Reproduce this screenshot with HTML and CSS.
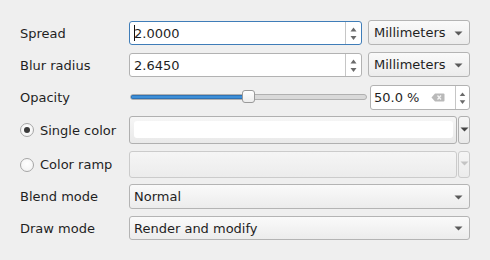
FILE: index.html
```html
<!DOCTYPE html>
<html>
<head>
<meta charset="utf-8">
<link rel="stylesheet" href="styles.css">
</head>
<body>
<div class="form">
  <div class="row">
    <div class="label">Spread</div>
    <div class="controls">
      <div class="spin spin-main focus">
        <span class="value"><i class="caret"></i>2.0000</span>
        <span class="arrows"><svg width="15" height="22" viewBox="0 0 15 22"><path d="M4.5 9.5 L7.5 5.5 L10.5 9.5 Z" fill="#6a6a6a"/><path d="M4.5 14 L7.5 18 L10.5 14 Z" fill="#6a6a6a"/></svg></span>
      </div>
      <div class="combo unit"><span>Millimeters</span><svg class="drop" width="9" height="5" viewBox="0 0 9 5"><path d="M0.5 0.5 H8.5 L4.5 4.5 Z" fill="#5a5a5a"/></svg></div>
    </div>
  </div>
  <div class="row">
    <div class="label">Blur radius</div>
    <div class="controls">
      <div class="spin spin-main">
        <span class="value">2.6450</span>
        <span class="arrows"><svg width="15" height="22" viewBox="0 0 15 22"><path d="M4.5 9.5 L7.5 5.5 L10.5 9.5 Z" fill="#6a6a6a"/><path d="M4.5 14 L7.5 18 L10.5 14 Z" fill="#6a6a6a"/></svg></span>
      </div>
      <div class="combo unit"><span>Millimeters</span><svg class="drop" width="9" height="5" viewBox="0 0 9 5"><path d="M0.5 0.5 H8.5 L4.5 4.5 Z" fill="#5a5a5a"/></svg></div>
    </div>
  </div>
  <div class="row">
    <div class="label">Opacity</div>
    <div class="controls opacity">
      <div class="slider">
        <div class="groove"><div class="fill" style="width:50%"></div></div>
        <div class="handle" style="left:113px"></div>
      </div>
      <div class="spin spin-pct">
        <span class="value">50.0 %</span>
        <svg class="clear" width="14" height="9" viewBox="0 0 14 9"><path d="M4 0.5 H12.5 Q13.5 0.5 13.5 1.5 V7.5 Q13.5 8.5 12.5 8.5 H4 L0.5 4.5 Z" fill="#b9b9b9"/><path d="M6.5 2.5 L10 6.5 M10 2.5 L6.5 6.5" stroke="#f4f4f4" stroke-width="1.3"/></svg>
        <span class="arrows"><svg width="14" height="23" viewBox="0 0 14 23"><path d="M4 10 L7 6 L10 10 Z" fill="#6a6a6a"/><path d="M4 14.5 L7 18.5 L10 14.5 Z" fill="#6a6a6a"/></svg></span>
      </div>
    </div>
  </div>
  <div class="row">
    <div class="label radio-label"><span class="radio checked"></span>Single color</div>
    <div class="controls colorrow">
      <div class="colorbtn"><div class="swatch"></div></div>
      <div class="menubtn"><svg width="9" height="5" viewBox="0 0 9 5"><path d="M0.5 0.5 H8.5 L4.5 4.5 Z" fill="#444"/></svg></div>
    </div>
  </div>
  <div class="row">
    <div class="label radio-label"><span class="radio"></span>Color ramp</div>
    <div class="controls colorrow ramp">
      <div class="colorbtn disabled"></div>
      <div class="menubtn disabled"><svg width="9" height="5" viewBox="0 0 9 5"><path d="M0.5 0.5 H8.5 L4.5 4.5 Z" fill="#c4c4c4"/></svg></div>
    </div>
  </div>
  <div class="row">
    <div class="label">Blend mode</div>
    <div class="controls">
      <div class="combo wide blend"><span>Normal</span><svg class="drop" width="9" height="5" viewBox="0 0 9 5"><path d="M0.5 0.5 H8.5 L4.5 4.5 Z" fill="#5a5a5a"/></svg></div>
    </div>
  </div>
  <div class="row">
    <div class="label">Draw mode</div>
    <div class="controls">
      <div class="combo wide draw"><span>Render and modify</span><svg class="drop" width="9" height="5" viewBox="0 0 9 5"><path d="M0.5 0.5 H8.5 L4.5 4.5 Z" fill="#5a5a5a"/></svg></div>
    </div>
  </div>
</div>
</body>
</html>
```

FILE: styles.css
```css
html, body {
  margin: 0;
  padding: 0;
  background: #efefef;
}
body {
  width: 490px;
  height: 260px;
  overflow: hidden;
  font-family: "DejaVu Sans", sans-serif;
  font-size: 13px;
  color: #1f1f1f;
}
.form {
  padding: 21px 20px 0 20px;
  display: grid;
  grid-template-rows: 25px 25px 24px 28px 26px 25px 24px;
  row-gap: 7px;
  align-items: start;
}
.row {
  display: grid;
  grid-template-columns: 109px 341px;
  align-items: center;
}
.label {
  white-space: nowrap;
}
.controls {
  display: flex;
  align-items: center;
  gap: 6px;
}
.spin {
  box-sizing: border-box;
  height: 24px;
  display: flex;
  align-items: stretch;
  background: #fff;
  border: 1px solid #b2b2b2;
  border-radius: 3px;
}
.spin.focus {
  border-color: #3f7db8;
}
.spin-main {
  width: 233px;
}
.spin .value {
  flex: 1;
  display: flex;
  align-items: center;
  padding-left: 4px;
}
.caret {
  display: inline-block;
  width: 1px;
  height: 16px;
  background: #111;
  margin-right: -1px;
}
.arrows {
  width: 15px;
  border-left: 1px solid #c6c6c6;
  display: flex;
  align-items: center;
}
.arrows svg {
  display: block;
}
.combo {
  box-sizing: border-box;
  height: 25px;
  margin-top: -1px;
  display: flex;
  align-items: center;
  justify-content: space-between;
  padding: 0 6px 0 5px;
  border: 1px solid #b4b4b4;
  border-radius: 3px;
  background: linear-gradient(#fafafa, #ececec);
}
.combo.unit {
  width: 102px;
  padding-left: 5px;
}
.combo.wide {
  width: 341px;
  padding-left: 4px;
  margin-top: 0;
}
.combo.draw {
  height: 24px;
}
.drop {
  display: block;
  margin-top: 1px;
}
.opacity {
  gap: 3px;
}
.slider {
  position: relative;
  width: 238px;
  height: 25px;
}
.groove {
  position: absolute;
  left: 1px;
  right: 0;
  top: 9px;
  height: 4px;
  border: 1px solid #b0b0b0;
  border-radius: 3px;
  background: #d9d9d9;
  overflow: hidden;
}
.fill {
  height: 100%;
  background: #3d8fd8;
  box-shadow: inset 0 0 0 1px #2f73b5;
}
.handle {
  position: absolute;
  top: 5px;
  width: 11px;
  height: 11px;
  border: 1px solid #9a9a9a;
  border-radius: 3px;
  background: linear-gradient(#ffffff, #ededed);
}
.spin-pct {
  width: 100px;
  height: 25px;
  margin-top: -1px;
}
.spin-pct .value {
  padding-left: 3px;
}
.clear {
  align-self: center;
  margin-right: 10px;
}
.spin-pct .arrows {
  width: 13px;
}
.radio-label {
  display: flex;
  align-items: center;
  gap: 6px;
}
.radio {
  box-sizing: border-box;
  width: 14px;
  height: 14px;
  border-radius: 50%;
  border: 1px solid #a6a6a6;
  background: radial-gradient(circle at 50% 40%, #ffffff, #f0f0f0);
  position: relative;
}
.radio.checked::after {
  content: "";
  position: absolute;
  left: 3px;
  top: 3px;
  width: 6px;
  height: 6px;
  border-radius: 50%;
  background: #3a3a3a;
}
.colorrow {
  gap: 1px;
  align-items: stretch;
  height: 28px;
}
.colorrow.ramp {
  height: 27px;
}
.colorbtn {
  box-sizing: border-box;
  width: 328px;
  border: 1px solid #b0b0b0;
  border-radius: 3px;
  background: linear-gradient(#f6f6f6, #e9e9e9);
  padding: 4px 3px 5px 4px;
}
.swatch {
  height: 100%;
  background: #fff;
  border-radius: 3px;
}
.menubtn {
  box-sizing: border-box;
  width: 12px;
  border: 1px solid #b0b0b0;
  border-radius: 3px;
  background: linear-gradient(#f6f6f6, #e9e9e9);
  display: flex;
  align-items: center;
  justify-content: center;
}
.menubtn svg {
  display: block;
  margin-bottom: 2px;
}
.colorbtn.disabled, .menubtn.disabled {
  border-color: #cbcbcb;
  background: linear-gradient(#f5f5f5, #ececec);
}
```
